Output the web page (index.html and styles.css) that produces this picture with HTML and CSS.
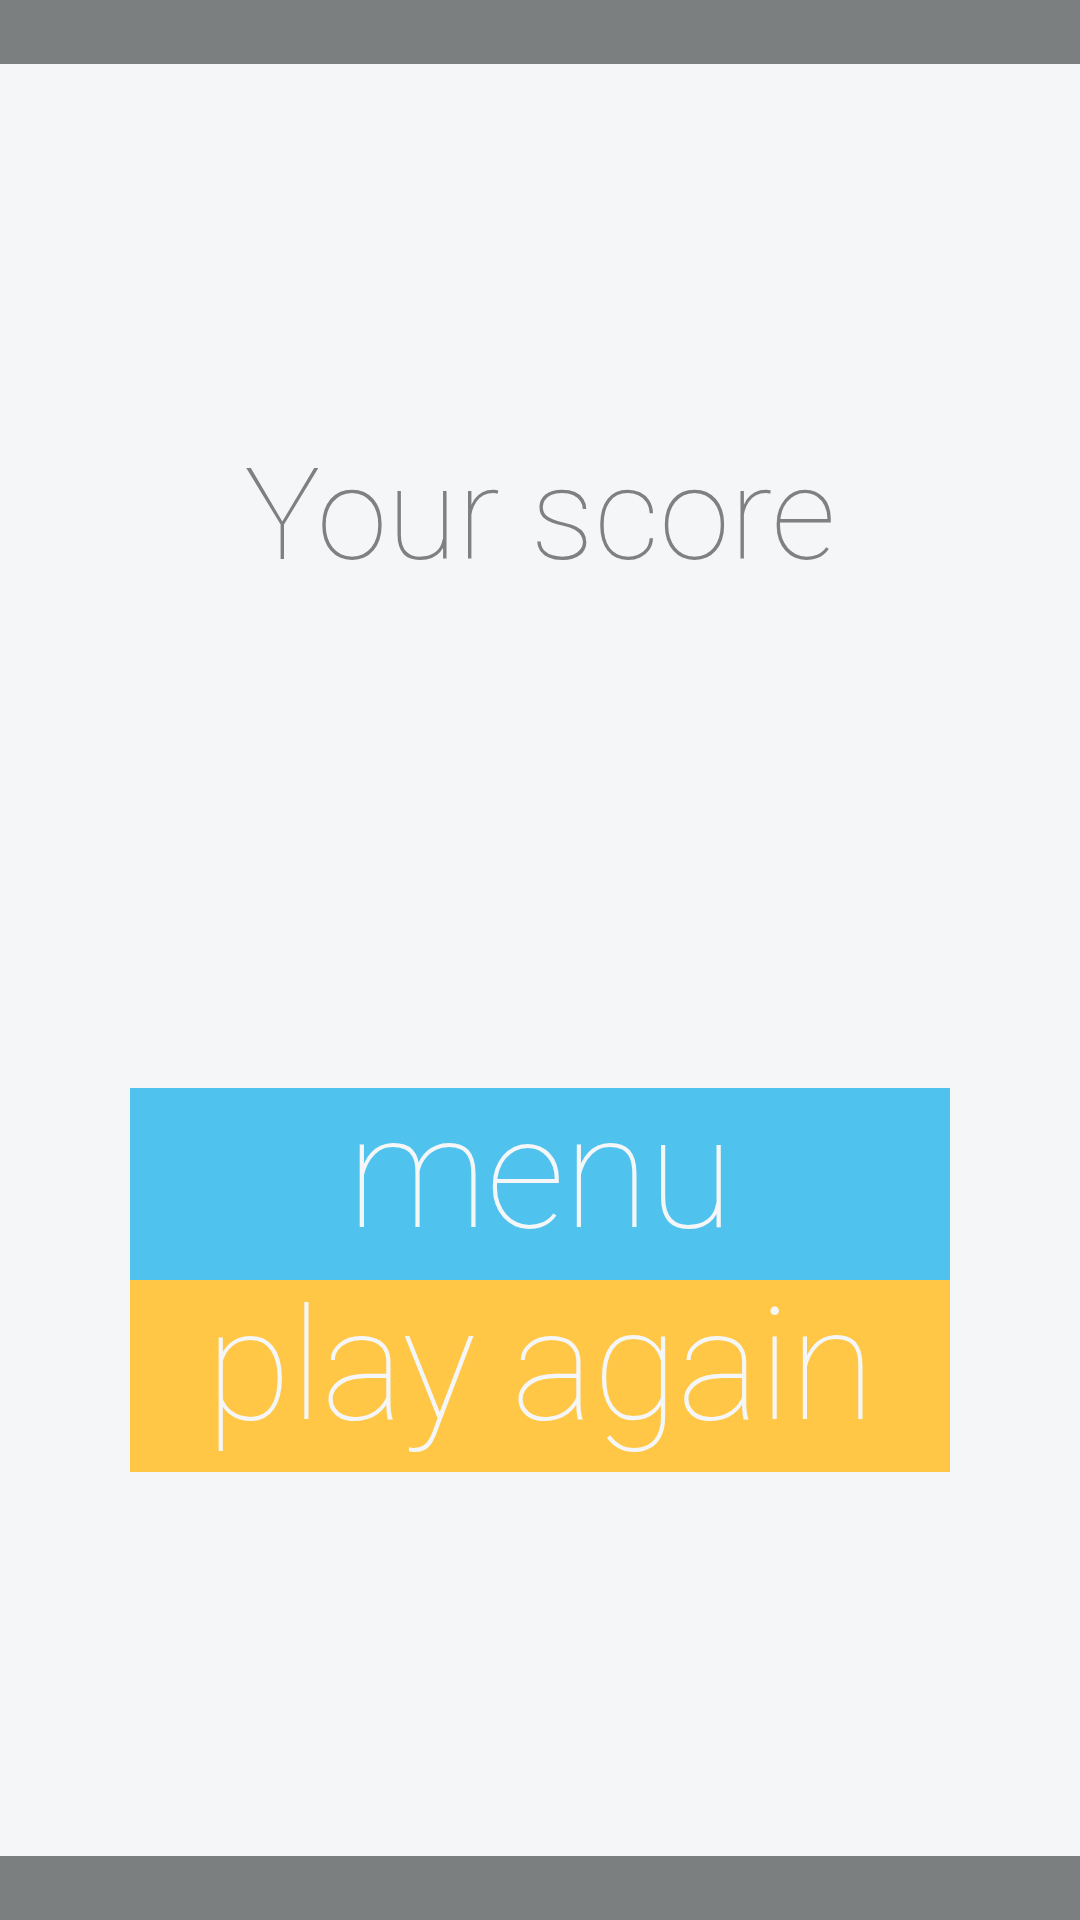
FILE: index.html
```html
<!DOCTYPE html>
<html>
<head>
<meta charset="utf-8">
<link rel="stylesheet" href="styles.css">
</head>
<body>
<div class="screen">
  <div class="bar"></div>
  <main class="content">
    <h1 class="title">Your score</h1>
    <div class="buttons">
      <div class="btn btn-menu">menu</div>
      <div class="btn btn-play">play again</div>
    </div>
  </main>
  <div class="bar"></div>
</div>
</body>
</html>
```

FILE: styles.css
```css
html, body {
  margin: 0;
  padding: 0;
}
body {
  background: #f5f6f8;
  font-family: Roboto, "Noto Sans", sans-serif;
}
.screen {
  width: 1080px;
  height: 1920px;
  display: flex;
  flex-direction: column;
}
.bar {
  height: 64px;
  background: #7b7f7f;
  flex: none;
}
.content {
  flex: 1;
  display: flex;
  flex-direction: column;
  align-items: center;
}
.title {
  margin: 387px 0 0 0;
  font-size: 128px;
  line-height: 128px;
  font-weight: 100;
  color: #7f8080;
  height: 128px;
}
.buttons {
  margin-top: 509px;
  width: 820px;
  display: flex;
  flex-direction: column;
}
.btn {
  box-sizing: border-box;
  height: 192px;
  padding-bottom: 20px;
  display: flex;
  align-items: center;
  justify-content: center;
  font-size: 156px;
  line-height: 1;
  font-weight: 100;
  color: #f5f6f8;
  letter-spacing: -1px;
}
.btn-menu {
  background: #4fc3ee;
}
.btn-play {
  background: #ffc745;
}
```
